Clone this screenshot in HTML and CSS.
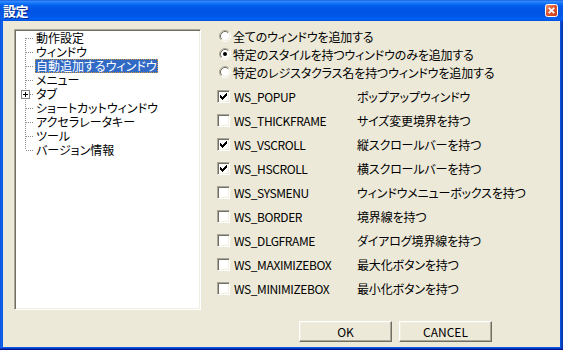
FILE: index.html
```html
<!DOCTYPE html>
<html lang="ja">
<head>
<meta charset="utf-8">
<title>設定</title>
<link rel="stylesheet" href="styles.css">
</head>
<body>
<div class="window">
  <div class="titlebar">
    <span class="title">設定</span>
    <span class="close">
      <svg width="13" height="13" viewBox="0 0 13 13">
        <defs>
          <linearGradient id="cg" x1="0" y1="0" x2="1" y2="1">
            <stop offset="0" stop-color="#f39a7c"/>
            <stop offset="0.45" stop-color="#e0562f"/>
            <stop offset="1" stop-color="#c23d17"/>
          </linearGradient>
        </defs>
        <rect x="0.5" y="0.5" width="12" height="12" rx="2" fill="url(#cg)" stroke="#fff"/>
        <path d="M3.8 3.8l5.4 5.4M9.2 3.8l-5.4 5.4" stroke="#fff" stroke-width="1.7"/>
      </svg>
    </span>
  </div>
  <div class="client">
    <div class="main">
      <div class="tree">
        <ul class="tree-list">
          <li class="node"><span class="gutter"></span><span class="label">動作設定</span></li>
          <li class="node"><span class="gutter"></span><span class="label">ウィンドウ</span></li>
          <li class="node"><span class="gutter"></span><span class="label selected">自動追加するウィンドウ</span></li>
          <li class="node"><span class="gutter"></span><span class="label">メニュー</span></li>
          <li class="node"><span class="gutter"><span class="expander"><svg width="7" height="7" viewBox="0 0 7 7"><path d="M1 3.5h5M3.5 1v5" stroke="#000" stroke-width="1"/></svg></span></span><span class="label">タブ</span></li>
          <li class="node"><span class="gutter"></span><span class="label">ショートカットウィンドウ</span></li>
          <li class="node"><span class="gutter"></span><span class="label">アクセラレータキー</span></li>
          <li class="node"><span class="gutter"></span><span class="label">ツール</span></li>
          <li class="node"><span class="gutter"></span><span class="label">バージョン情報</span></li>
        </ul>
      </div>
      <div class="options">
        <div class="radios">
          <div class="radio-row">
            <svg class="radio" width="12" height="12" viewBox="0 0 12 12"><circle cx="6" cy="6" r="4.5" fill="#fff"/><path d="M2.11 9.89A5.5 5.5 0 0 1 9.89 2.11" fill="none" stroke="#aca899"/><path d="M9.89 2.11A5.5 5.5 0 0 1 2.11 9.89" fill="none" stroke="#fff"/><path d="M2.82 9.18A4.5 4.5 0 0 1 9.18 2.82" fill="none" stroke="#716f64"/><path d="M9.18 2.82A4.5 4.5 0 0 1 2.82 9.18" fill="none" stroke="#f1efe2"/></svg>
            <span class="rtext">全てのウィンドウを追加する</span>
          </div>
          <div class="radio-row">
            <svg class="radio" width="12" height="12" viewBox="0 0 12 12"><circle cx="6" cy="6" r="4.5" fill="#fff"/><path d="M2.11 9.89A5.5 5.5 0 0 1 9.89 2.11" fill="none" stroke="#aca899"/><path d="M9.89 2.11A5.5 5.5 0 0 1 2.11 9.89" fill="none" stroke="#fff"/><path d="M2.82 9.18A4.5 4.5 0 0 1 9.18 2.82" fill="none" stroke="#716f64"/><path d="M9.18 2.82A4.5 4.5 0 0 1 2.82 9.18" fill="none" stroke="#f1efe2"/><circle cx="6" cy="6" r="2" fill="#000"/></svg>
            <span class="rtext">特定のスタイルを持つウィンドウのみを追加する</span>
          </div>
          <div class="radio-row">
            <svg class="radio" width="12" height="12" viewBox="0 0 12 12"><circle cx="6" cy="6" r="4.5" fill="#fff"/><path d="M2.11 9.89A5.5 5.5 0 0 1 9.89 2.11" fill="none" stroke="#aca899"/><path d="M9.89 2.11A5.5 5.5 0 0 1 2.11 9.89" fill="none" stroke="#fff"/><path d="M2.82 9.18A4.5 4.5 0 0 1 9.18 2.82" fill="none" stroke="#716f64"/><path d="M9.18 2.82A4.5 4.5 0 0 1 2.82 9.18" fill="none" stroke="#f1efe2"/></svg>
            <span class="rtext">特定のレジスタクラス名を持つウィンドウを追加する</span>
          </div>
        </div>
        <div class="checks">
          <div class="check-row"><span class="checkbox"><svg width="11" height="11" viewBox="0 0 11 11"><path d="M2 4h1v3h-1zM3 5h1v3h-1zM4 6h1v3h-1zM5 5h1v3h-1zM6 4h1v3h-1zM7 3h1v3h-1zM8 2h1v3h-1z" fill="#000"/></svg></span><span class="name">WS_POPUP</span><span class="desc">ポップアップウィンドウ</span></div>
          <div class="check-row"><span class="checkbox"></span><span class="name">WS_THICKFRAME</span><span class="desc">サイズ変更境界を持つ</span></div>
          <div class="check-row"><span class="checkbox"><svg width="11" height="11" viewBox="0 0 11 11"><path d="M2 4h1v3h-1zM3 5h1v3h-1zM4 6h1v3h-1zM5 5h1v3h-1zM6 4h1v3h-1zM7 3h1v3h-1zM8 2h1v3h-1z" fill="#000"/></svg></span><span class="name">WS_VSCROLL</span><span class="desc">縦スクロールバーを持つ</span></div>
          <div class="check-row"><span class="checkbox"><svg width="11" height="11" viewBox="0 0 11 11"><path d="M2 4h1v3h-1zM3 5h1v3h-1zM4 6h1v3h-1zM5 5h1v3h-1zM6 4h1v3h-1zM7 3h1v3h-1zM8 2h1v3h-1z" fill="#000"/></svg></span><span class="name">WS_HSCROLL</span><span class="desc">横スクロールバーを持つ</span></div>
          <div class="check-row"><span class="checkbox"></span><span class="name">WS_SYSMENU</span><span class="desc">ウィンドウメニューボックスを持つ</span></div>
          <div class="check-row"><span class="checkbox"></span><span class="name">WS_BORDER</span><span class="desc">境界線を持つ</span></div>
          <div class="check-row"><span class="checkbox"></span><span class="name">WS_DLGFRAME</span><span class="desc">ダイアログ境界線を持つ</span></div>
          <div class="check-row"><span class="checkbox"></span><span class="name">WS_MAXIMIZEBOX</span><span class="desc">最大化ボタンを持つ</span></div>
          <div class="check-row"><span class="checkbox"></span><span class="name">WS_MINIMIZEBOX</span><span class="desc">最小化ボタンを持つ</span></div>
        </div>
      </div>
    </div>
    <div class="buttons">
      <button class="btn" type="button">OK</button>
      <button class="btn" type="button">CANCEL</button>
    </div>
  </div>
</div>
</body>
</html>
```

FILE: styles.css
```css
html, body {
  margin: 0;
  padding: 0;
  background: #ece9d8;
}

body {
  font-family: "Noto Sans CJK JP", sans-serif;
  font-size: 12px;
  color: #000;
}

.window {
  width: 563px;
  height: 350px;
  box-sizing: border-box;
  display: flex;
  flex-direction: column;
  padding: 0 3px 3px;
  background: linear-gradient(to right, #0842c8 0, #166cf0 1px, #0a5ae8 2px, #0a5ae8 560px, #0847cc 561px, #0638b0 562px);
  box-shadow: inset 0 -1px #00138c, inset 0 -2px #0836c0;
}

.titlebar {
  height: 21px;
  flex: none;
  margin: 0 -3px;
  display: flex;
  align-items: center;
  justify-content: space-between;
  padding: 0 5px 0 3px;
  background: linear-gradient(to bottom, #0a4fd6 0, #3a8cff 1px, #1679fa 3px, #0662ee 5px, #0058e8 8px, #0054e3 12px, #0057ea 16px, #0061f5 19px, #0050dc 21px);
}

.title {
  color: #fff;
  font-weight: bold;
  font-size: 13px;
  line-height: 21px;
  letter-spacing: -0.5px;
  text-shadow: 1px 1px #0a2a8a;
}

.close {
  display: flex;
  width: 13px;
  height: 13px;
}

.client {
  flex: 1;
  background: #ece9d8;
  display: flex;
  flex-direction: column;
  padding: 8px 0 5px 11px;
}

.main {
  display: flex;
  height: 281px;
  flex: none;
}

.tree {
  width: 187px;
  height: 281px;
  flex: none;
  box-sizing: border-box;
  background: #fff;
  border: 1px solid;
  border-color: #aca899 #fff #fff #aca899;
  box-shadow: inset 1px 1px #716f64, inset -1px -1px #f1efe2;
  padding: 1px;
}

.tree-list {
  list-style: none;
  margin: 0;
  padding: 0;
  background: repeating-linear-gradient(to bottom, #8c8c8c 0 1px, transparent 1px 2px) 9px 7px / 1px calc(100% - 14px) no-repeat;
}

.node {
  display: flex;
  height: 14px;
}

.gutter {
  width: 19px;
  flex: none;
  box-sizing: border-box;
  display: flex;
  align-items: center;
  padding-left: 5px;
  background: repeating-linear-gradient(to right, #8c8c8c 0 1px, transparent 1px 2px) 10px 7px / 8px 1px no-repeat;
}

.expander {
  width: 9px;
  height: 9px;
  box-sizing: border-box;
  border: 1px solid #848484;
  background: #fff;
  display: flex;
  align-items: center;
  justify-content: center;
}

.label {
  height: 14px;
  line-height: 14px;
  padding: 0 1px;
  white-space: nowrap;
  font-feature-settings: "palt";
}

.label.selected {
  background: #316ac5;
  color: #fff;
  outline: 1px dotted #ce953a;
  outline-offset: -1px;
}

.options {
  margin-left: 16px;
  margin-top: -2px;
  display: flex;
  flex-direction: column;
}

.radios {
  display: flex;
  flex-direction: column;
  padding-left: 2px;
}

.radio-row {
  display: flex;
  align-items: center;
  height: 18px;
  gap: 2px;
}

.radio {
  flex: none;
}

.rtext,
.desc {
  white-space: nowrap;
  font-feature-settings: "palt";
  letter-spacing: -0.15px;
}

.checks {
  margin-top: 3px;
  display: flex;
  flex-direction: column;
}

.check-row {
  display: flex;
  align-items: center;
  height: 24px;
}

.checkbox {
  width: 13px;
  height: 13px;
  flex: none;
  box-sizing: border-box;
  background: #fff;
  border: 1px solid;
  border-color: #aca899 #fff #fff #aca899;
  box-shadow: inset 1px 1px #716f64, inset -1px -1px #f1efe2;
  display: flex;
}

.name {
  margin-left: 4px;
  width: 123px;
  flex: none;
  font-family: "Noto Sans CJK JP", sans-serif;
  font-size: 12px;
  letter-spacing: -0.4px;
  white-space: nowrap;
}

.buttons {
  display: flex;
  gap: 7px;
  margin-top: 11px;
  padding-left: 285px;
}

.btn {
  width: 93px;
  height: 21px;
  box-sizing: border-box;
  padding: 0;
  margin: 0;
  background: #ece9d8;
  border: 1px solid;
  border-color: #fff #716f64 #716f64 #fff;
  box-shadow: inset -1px -1px #aca899, inset 1px 1px #f1efe2;
  font-family: "Noto Sans CJK JP", sans-serif;
  font-size: 12px;
  color: #000;
}
```
